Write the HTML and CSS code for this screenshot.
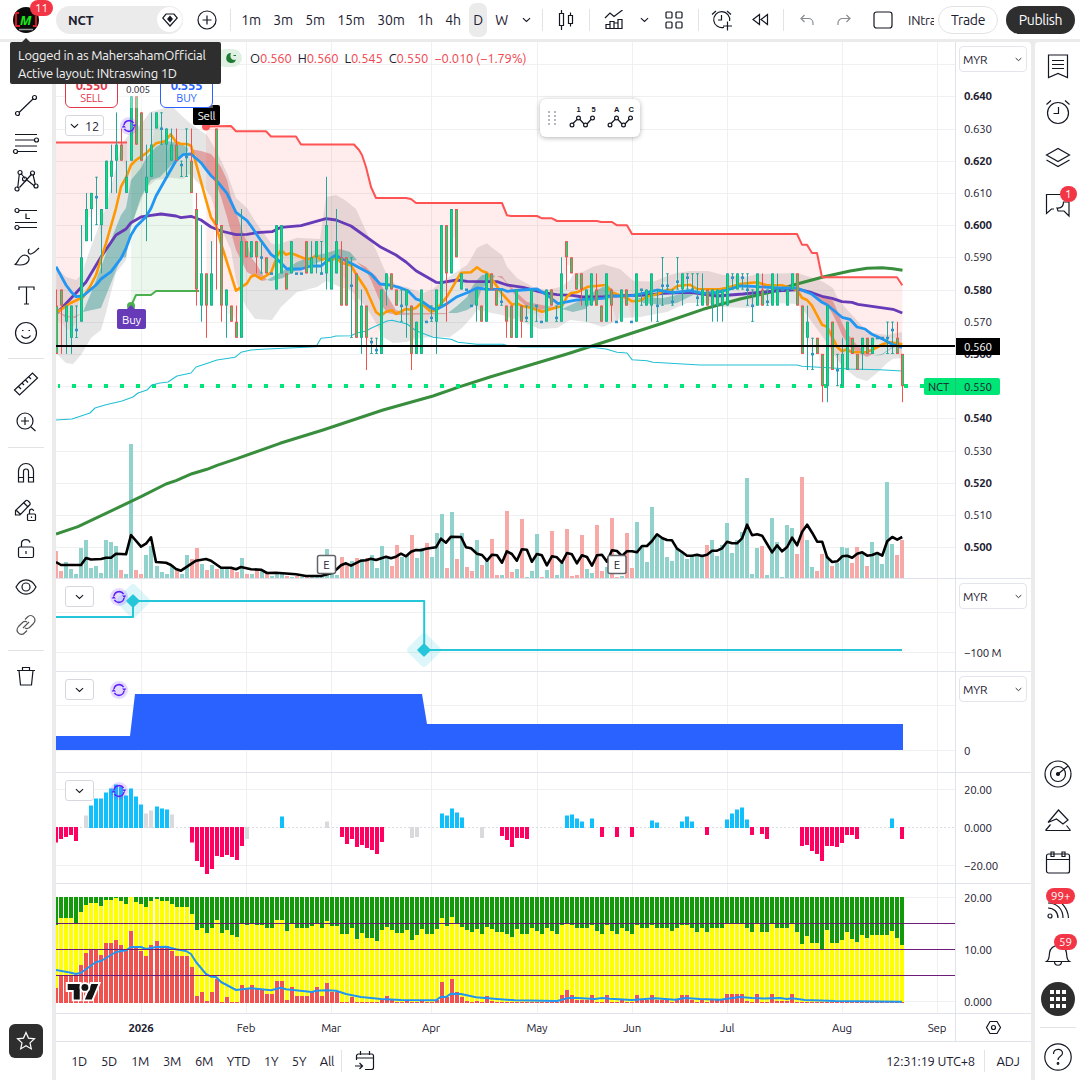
FILE: index.html
```html
<!DOCTYPE html>
<html lang="en">

<head>
    <meta charset="UTF-8">
    <meta name="viewport" content="width=device-width, initial-scale=1.0">
    <title>NCT 0.550</title>
    <link rel="stylesheet" href="styles.css">
</head>

<body>
    <!-- shared symbols -->
    <svg class="defs">
        <symbol id="chev" viewBox="0 0 10 6"><path d="M1 1l4 3.6L9 1"/></symbol>
        <symbol id="sync" viewBox="0 0 18 18">
            <circle cx="9" cy="9" r="9" fill="#7b4dff" fill-opacity=".2" stroke="none"/>
            <path d="M4 8a5.2 5.2 0 0 1 9.6-1.8M14 10a5.2 5.2 0 0 1-9.6 1.8" stroke="#5b21f5" stroke-width="1.5"/>
            <path d="M12 7.6h4.4L14.4 10zM6 10.400H1.600L3.600 8z" fill="#5b21f5" stroke="none"/>
        </symbol>
    </svg>

    <header class="topbar">
        <div class="avatar">
            <svg width="26" height="26" viewBox="0 0 26 26">
                <circle cx="13" cy="13" r="13" fill="#0b0b0b" stroke="none"/>
                <path d="M6 6H3v13h4M20 19h3V9" stroke="#e01b24" stroke-width="1.8"/>
                <text x="12.500" y="17.500" class="avatar-m">M</text>
                <path d="M6 22.500h14" stroke="#999" stroke-width="1.500"/>
            </svg>
            <span class="badge">11</span>
        </div>
        <div class="search">
            <b>NCT</b>
            <span class="gem"><svg width="16" height="14" viewBox="0 0 16 14"><path d="M4 1h8l3.300 4L8 13 .7 5z"/><path d="M8 3.500L10.200 6 8 8.500 5.800 6z" fill="#131722"/></svg></span>
        </div>
        <div class="ib w-add"><svg width="20" height="20" viewBox="0 0 20 20"><circle cx="10" cy="10" r="9"/><path d="M10 5.500v9M5.500 10h9"/></svg></div>
        <i class="sep"></i>
        <span class="tf tf-first">1m</span>
        <span class="tf">3m</span>
        <span class="tf">5m</span>
        <span class="tf tf-wide">15m</span>
        <span class="tf tf-wide">30m</span>
        <span class="tf tf-hour">1h</span>
        <span class="tf tf-hour">4h</span>
        <span class="tf active">D</span>
        <span class="tf tf-week">W</span>
        <div class="ib w24"><svg width="9" height="6"><use href="#chev"/></svg></div>
        <i class="sep sep-l4"></i>
        <div class="ib w46"><svg width="16" height="20" viewBox="0 0 16 20"><path d="M1.500 3.500h4v12h-4zM3.500 0v3.500M3.500 15.500V20M10.500 5.500h4v8h-4zM12.500 2.500v3M12.500 13.500v3"/></svg></div>
        <i class="sep"></i>
        <div class="ib w48"><svg width="20" height="20" viewBox="0 0 20 20"><path d="M1 8l5-5 4 3.500L18.500 0M2 18.500v-4h4v4zM6 18.500v-7h4v7zM10 18.500v-5.500h4v5.500zM14 18.500v-9h4v9z"/></svg></div>
        <div class="ib w12"><svg width="9" height="6"><use href="#chev"/></svg></div>
        <div class="ib w48"><svg width="18" height="18" viewBox="0 0 18 18"><rect x="1" y="1" width="6" height="6" rx="1"/><rect x="11" y="1" width="6" height="6" rx="1"/><rect x="1" y="11" width="6" height="6" rx="1"/><rect x="11" y="11" width="6" height="6" rx="1"/></svg></div>
        <i class="sep"></i>
        <div class="ib w46"><svg width="22" height="22" viewBox="0 0 22 22"><path d="M13 18.300A8 8 0 1 1 18.600 12M10.500 6v5H7M1 5.500L5 2M16 2l4 3.500M16.500 12.500v9M12 17h9"/></svg></div>
        <div class="ib w30"><svg width="17" height="14" viewBox="0 0 17 14"><path d="M7.500 1.500v10L1 6.500zM15.500 1.500v10L9 6.500z"/></svg></div>
        <i class="sep sep-l8"></i>
        <div class="ib w46 muted"><svg width="14" height="12" viewBox="0 0 14 12"><path d="M4.500 1L1 4.500 4.500 8M1 4.500h7.500a4.500 4.500 0 0 1 4.500 4.500v2"/></svg></div>
        <div class="ib w28 muted"><svg width="14" height="12" viewBox="0 0 14 12"><path d="M9.500 1L13 4.500 9.500 8M13 4.500H5.500A4.500 4.500 0 0 0 1 9v2"/></svg></div>
        <div class="ib w34"><svg width="20" height="18" viewBox="0 0 20 18"><rect x="1" y="1" width="18" height="16" rx="2.500"/></svg></div>
        <span class="layout-name">INtraswing</span>
        <a class="trade">Trade</a>
        <a class="publish">Publish</a>
    </header>

    <div class="workspace">
        <nav class="tools">
            <div class="tool"><svg width="28" height="28" viewBox="0 0 28 28"><path d="M7 21.500L21 8"/><circle cx="5.500" cy="22.500" r="2"/><circle cx="22.500" cy="6.500" r="2"/></svg></div>
            <div class="tool"><svg width="28" height="28" viewBox="0 0 28 28"><path d="M3 5.500h22M3 11h19.500M3 17h22M5.500 22.500H25"/><circle cx="24.500" cy="11" r="2"/><circle cx="3.500" cy="22.500" r="2"/></svg></div>
            <div class="tool"><svg width="28" height="28" viewBox="0 0 28 28"><path d="M7.300 7l-1.600 14M7.500 20.500L19.800 7M9 6.500l4 5M15 13l7.500 6M21 7.500l2.300 10"/><circle cx="8" cy="5.500" r="2"/><circle cx="20.500" cy="6" r="2"/><circle cx="12.500" cy="12" r="2"/><circle cx="5" cy="22" r="2"/><circle cx="24" cy="19" r="2"/></svg></div>
            <div class="tool"><svg width="28" height="28" viewBox="0 0 28 28"><path d="M7 5.500h18M3 17.500h22M7 22.500h18M14 8.500v5h4"/><circle cx="5" cy="5.500" r="2"/><circle cx="5" cy="22.500" r="2"/></svg></div>
            <div class="tool"><svg width="28" height="28" viewBox="0 0 28 28"><path d="M2.500 21.500c4-.5 3.500-9 10-9.500 3.500 0 5.500 3 4 6-2 4-8 4.500-14 3.500zM17.500 6c-2 1-1.500 4.500.5 5 3 .5 5-2.500 9-6"/></svg></div>
            <div class="tool"><svg width="28" height="28" viewBox="0 0 28 28"><path d="M7 9V6h15v3M14.500 6v17M12 23h5"/></svg></div>
            <div class="tool"><svg width="28" height="28" viewBox="0 0 28 28"><circle cx="14" cy="14" r="10.500"/><path d="M9.500 16.500c2 3.500 7 3.500 9 0M10 11.500h1.500M16.500 11.500H18"/></svg></div>
            <i class="line"></i>
            <div class="tool"><svg width="28" height="28" viewBox="0 0 28 28"><path d="M2.500 20L20.500 3l5 5-18 17zM6.500 16.500l2.500 2.500M10 13l2 2M13.500 10l2.500 2.500M17 7l2 2"/></svg></div>
            <div class="tool"><svg width="28" height="28" viewBox="0 0 28 28"><circle cx="13" cy="13" r="8"/><path d="M9 13h8M13 9v8M19 19l4.500 4"/></svg></div>
            <i class="line"></i>
            <div class="tool"><svg width="28" height="28" viewBox="0 0 28 28"><path d="M6.500 23V12a7.500 7.500 0 0 1 15 0v11h-5V12.500a2.500 2.500 0 0 0-5 0V23zM6.500 18.500h5M16.500 18.500h5"/></svg></div>
            <div class="tool"><svg width="28" height="28" viewBox="0 0 28 28"><path d="M3.500 18v-4.500L14 3.500c1-1 5 2.500 4 4l-10 10.500zM12 6l4 4M4.500 13.500l4 4"/><rect x="15.500" y="17" width="8" height="6.500" rx="1"/><path d="M17.500 17v-2.500c0-3 4-3 4-.5M19.500 19.500v1.500"/></svg></div>
            <div class="tool"><svg width="28" height="28" viewBox="0 0 28 28"><rect x="6.500" y="12" width="15" height="10.500" rx="1.500"/><path d="M9.500 12V8.500c0-5 7.500-5 8.500-1M14 16v3" /></svg></div>
            <div class="tool"><svg width="28" height="28" viewBox="0 0 28 28"><path d="M4 14c5-9.500 15-9.500 20 0-5 9.500-15 9.500-20 0z"/><circle cx="14" cy="14" r="4"/></svg></div>
            <div class="tool"><svg width="28" height="28" viewBox="0 0 28 28" class="thin"><path d="M13 8.500l2.500-2.500c4-4 10 1.500 6 6.500l-4 4c-1.500 1.200-3 1.300-4.500.5M15 19.500L12.500 22c-4 4-10-1.500-6-6.500l4-4c1.500-1.200 3-1.300 4.500-.5M11 17l6-6"/></svg></div>
            <i class="line"></i>
            <div class="tool"><svg width="28" height="28" viewBox="0 0 28 28"><path d="M5 8.500h18M7 8.500l1.500 14.500h11L21 8.500M10.500 8.500V5.500h7v3"/></svg></div>
            <div class="fav"><svg width="22" height="22" viewBox="0 0 22 22"><path d="M11 2.500l2.500 5.600 6 .7-4.500 4.100 1.300 6L11 15.800l-5.300 3.100 1.300-6-4.500-4.100 6-.7z"/></svg></div>
        </nav>

        <main class="chart-area">
            <svg id="chart" viewBox="56 42 975 1000" width="975" height="1000"></svg>

            <div class="ohlc">
                <span class="moon"><svg width="12" height="12" viewBox="0 0 12 12"><path d="M6 1a5 5 0 1 0 5 6.500C7.500 9 4 6 6 1z" fill="#1f7a34" stroke="none"/><path d="M8.500 3.500h2.500" stroke="#1f7a34"/></svg></span>
                <span>O<em>0.560</em></span>
                <span>H<em>0.560</em></span>
                <span>L<em>0.545</em></span>
                <span>C<em>0.550</em></span>
                <em>−0.010 (−1.79%)</em>
            </div>
            <div class="orders">
                <div class="order sell"><b>0.550</b>SELL</div>
                <span class="spread">0.005</span>
                <div class="order buy"><b>0.555</b>BUY</div>
            </div>
            <div class="legend-row l1">
                <span class="legend-btn"><svg width="9" height="6"><use href="#chev"/></svg> 12</span>
                <svg width="18" height="18"><use href="#sync"/></svg>
            </div>
            <div class="legend-row l2"><span class="legend-btn"><svg width="9" height="6"><use href="#chev"/></svg></span><svg width="18" height="18"><use href="#sync"/></svg></div>
            <div class="legend-row l3"><span class="legend-btn"><svg width="9" height="6"><use href="#chev"/></svg></span><svg width="18" height="18"><use href="#sync"/></svg></div>
            <div class="legend-row l4"><span class="legend-btn"><svg width="9" height="6"><use href="#chev"/></svg></span><svg width="18" height="18"><use href="#sync"/></svg></div>

            <div class="currency c1">MYR<svg width="7" height="5"><use href="#chev"/></svg></div>
            <div class="currency c2">MYR<svg width="7" height="5"><use href="#chev"/></svg></div>
            <div class="currency c3">MYR<svg width="7" height="5"><use href="#chev"/></svg></div>

            <!-- favourite drawings -->
            <div class="float-bar">
                <svg width="10" height="14" viewBox="0 0 10 14" class="grip"><path d="M1 1h2M7 1h2M1 5h2M7 5h2M1 9h2M7 9h2M1 13h2M7 13h2"/></svg>
                <svg width="28" height="24" viewBox="0 0 28 24"><path d="M4 17.500l4-4M11 13.500l4 4.500M18 18l4-4.500"/><circle cx="3" cy="19" r="1.900"/><circle cx="9.500" cy="12" r="1.900"/><circle cx="16.500" cy="19" r="1.900"/><circle cx="23.500" cy="12" r="1.900"/><text x="9.500" y="6">1</text><text x="24.500" y="6">5</text></svg>
                <svg width="28" height="24" viewBox="0 0 28 24"><path d="M4 17.500l4-4M11 13.500l4 4.500M18 18l4-4.500"/><circle cx="3" cy="19" r="1.900"/><circle cx="9.500" cy="12" r="1.900"/><circle cx="16.500" cy="19" r="1.900"/><circle cx="23.500" cy="12" r="1.900"/><text x="9.500" y="6">A</text><text x="24" y="6">C</text></svg>
            </div>

            <footer class="ranges">
                <span class="r1">1D</span><span class="r1">5D</span><span class="r2">1M</span><span class="r2">3M</span><span class="r2">6M</span><span class="r3">YTD</span><span class="r4">1Y</span><span class="r4">5Y</span><span class="r4">All</span>
                <i class="sep"></i>
                <svg width="22" height="20" viewBox="0 0 22 20" class="goto"><path d="M2.500 9V5a2 2 0 0 1 2-2h13a2 2 0 0 1 2 2v11.500a2 2 0 0 1-2 2H11M2.500 7h17M6.500 0v4M15.500 0v4M1 15h7M5.500 12l3 3-3 3"/></svg>
                <span class="clock">12:31:19 UTC+8</span>
                <i class="sep"></i>
                <span class="adj">ADJ</span>
            </footer>
        </main>

        <aside class="sidebar">
            <div class="side"><svg width="28" height="28" viewBox="0 0 28 28"><path d="M4.500 3h19v22.500L14 21.500l-9.500 4zM8 8.500h12M8 12.500h12M8 16.500h12"/></svg></div>
            <div class="side"><svg width="28" height="28" viewBox="0 0 28 28"><circle cx="14" cy="15" r="10.500"/><path d="M14.500 9v6.500h-5M2.500 6.500L7 2.500M21 2.500l4.500 4"/></svg></div>
            <div class="side"><svg width="28" height="28" viewBox="0 0 28 28"><path d="M2.500 11L14 4.500 25.500 11 14 17.500zM2.500 16L14 22.500 25.500 16"/></svg></div>
            <div class="side"><svg width="28" height="28" viewBox="0 0 28 28"><path d="M20 9V4.500H2.500v19l5-4.500H10M13 18c5 .5 6.500-2.500 6.500-6h5.500v14l-5-5h-6z"/></svg><span class="badge b-chat">1</span></div>
            <div class="side push"><svg width="28" height="28" viewBox="0 0 28 28"><circle cx="14" cy="14" r="13"/><circle cx="14" cy="14" r="7.500"/><path d="M14 14l10-8"/><circle cx="14" cy="14" r="1.500" fill="#131722"/></svg></div>
            <div class="side"><svg width="28" height="28" viewBox="0 0 28 28"><path d="M4 17.500L14.500 5l9.500 10-5 4-6.500-5-8.500 3.500M1.500 25.500l5-6M26.500 25.500l-4-5M1.500 25.500h25"/></svg></div>
            <div class="side"><svg width="28" height="28" viewBox="0 0 28 28"><rect x="2.500" y="4" width="23" height="19" rx="2"/><path d="M2.500 9.500h23M7 2h3v4.500H7zM18 2h3v4.500h-3z"/></svg></div>
            <div class="side"><svg width="28" height="28" viewBox="0 0 28 28"><circle cx="6" cy="21" r="2"/><path d="M4 13c6 0 10 4 10 10M4 8c9 0 15 6 15 15M9 4c8 1.500 15 9 15.500 19"/></svg><span class="badge b-feed">99+</span></div>
            <div class="side"><svg width="28" height="28" viewBox="0 0 28 28"><path d="M2.500 21.500c3-2 2.500-4.500 3-8.500.5-4.500 4-7.500 8.500-7.500s8 3 8.500 7.500c.5 4 0 6.500 3 8.500zM10.500 21.500c0 5 7 5 7 0"/></svg><span class="badge b-bell">59</span></div>
            <div class="side"><svg width="34" height="34" viewBox="0 0 34 34"><circle cx="17" cy="17" r="17" fill="#2e2e2e" stroke="none"/><path d="M9 10h4M15 10h4M21 10h4M9 17h4M15 17h4M21 17h4M9 24h4M15 24h4M21 24h4" stroke="#fff" stroke-width="4"/></svg></div>
            <i class="line"></i>
            <div class="side help"><svg width="28" height="28" viewBox="0 0 28 28"><circle cx="14" cy="14" r="13.200"/><path d="M9.500 11c0-6 9-6 9-1 0 3.500-4.500 3-4.500 7"/><circle cx="14" cy="20.500" r=".8"/></svg></div>
        </aside>
    </div>

    <div class="tooltip">Logged in as MahersahamOfficial<br>Active layout: INtraswing 1D</div>

    <script src="chart.js"></script>
</body>
</html>
```
FILE: styles.css
```css
* {
    box-sizing: border-box;
}

body {
    margin: 0;
    width: 1080px;
    height: 1080px;
    overflow: hidden;
    background: #ebebeb;
    color: #1c2030;
    font-family: "Ubuntu", "Noto Sans", sans-serif;
    font-size: 13px;
    letter-spacing: -0.2px;
}

svg {
    display: block;
    flex: none;
    fill: none;
    stroke: #131722;
    stroke-width: 1.2;
}

svg text {
    stroke: none;
}

.defs {
    position: absolute;
    width: 0;
    height: 0;
}

/* top bar */
.topbar {
    display: flex;
    align-items: center;
    height: 39px;
    background: #fff;
}

.avatar {
    position: relative;
    width: 52px;
    padding-left: 13px;
    margin-right: 4px;
}

.avatar-m {
    font: italic bold 13px "Noto Sans", sans-serif;
    text-anchor: middle;
    fill: #19e619;
}

.badge {
    position: absolute;
    top: -7px;
    left: 30px;
    height: 16px;
    padding: 0 5px;
    border-radius: 8px;
    background: #f23645;
    color: #fff;
    font-size: 11.5px;
    line-height: 16px;
    letter-spacing: 0;
}

.search {
    display: flex;
    align-items: center;
    justify-content: space-between;
    width: 127px;
    height: 28px;
    padding: 0 1px 0 12px;
    border-radius: 14px;
    background: #ebebeb;
}

.gem {
    display: flex;
    align-items: center;
    justify-content: center;
    width: 25px;
    height: 25px;
    border-radius: 50%;
    background: #fff;
}

.ib {
    display: flex;
    flex: none;
    align-items: center;
    justify-content: center;
    height: 34px;
}

.muted svg {
    stroke: #8a8c93;
}

.w-add { width: 47px; }
.w12 { width: 12px; }
.w24 { width: 24px; }
.w28 { width: 28px; }
.w30 { width: 30px; }
.w34 { width: 34px; margin-left: 8px; }
.w46 { width: 46px; }
.w48 { width: 48px; }

.sep {
    flex: none;
    width: 1px;
    height: 22px;
    background: #e3e3e5;
}

.sep-l4 { margin-left: 4px; }
.sep-l8 { margin-left: 8px; }

.tf {
    flex: none;
    width: 32px;
    font-size: 14px;
    line-height: 34px;
    text-align: center;
}

.tf-first { margin-left: 4px; }
.tf-wide { width: 40px; }
.tf-hour { width: 28px; }
.tf-week { width: 25px; }

.tf.active {
    width: 18px;
    margin: 0 2px;
    border-radius: 7px;
    background: #ebebeb;
}

.layout-name {
    flex: none;
    width: 26px;
    margin-left: 8px;
    overflow: hidden;
    white-space: nowrap;
}

.trade,
.publish {
    flex: none;
    height: 28px;
    border-radius: 14px;
    font-size: 14px;
    line-height: 26px;
    text-align: center;
    letter-spacing: -0.3px;
}

.trade {
    width: 60px;
    margin-left: 4px;
    border: 1px solid #e3e3e5;
}

.publish {
    width: 69px;
    margin-left: 8px;
    background: #2e2e2e;
    color: #fff;
    line-height: 28px;
}

/* body */
.workspace {
    display: flex;
    gap: 4px;
    height: 1038px;
    margin-top: 3px;
}

.tools {
    display: flex;
    flex-direction: column;
    align-items: center;
    width: 52px;
    padding-top: 44px;
    border-radius: 0 4px 0 0;
    background: #fff;
}

.tool {
    display: flex;
    flex: none;
    align-items: center;
    justify-content: center;
    height: 38px;
}

.thin {
    stroke: #555;
}

.line {
    flex: none;
    width: 36px;
    height: 1px;
    margin: 6px 0;
    background: #e3e3e5;
}

.fav {
    display: flex;
    align-items: center;
    justify-content: center;
    width: 34px;
    height: 34px;
    margin: auto 0 22px;
    border-radius: 6px;
    background: #2e2e2e;
}

.fav svg {
    stroke: #fff;
}

.chart-area {
    position: relative;
    display: flex;
    flex-direction: column;
    width: 975px;
    border-radius: 4px 4px 0 0;
    background: #fff;
    overflow: hidden;
}

.ohlc {
    position: absolute;
    top: 7px;
    left: 160px;
    display: flex;
    gap: 6px;
    line-height: 19px;
    letter-spacing: -0.15px;
    white-space: nowrap;
}

.ohlc em {
    color: #f0474f;
    font-style: normal;
}

.moon {
    display: flex;
    align-items: center;
    justify-content: flex-end;
    width: 26px;
    height: 18px;
    margin-right: 2px;
    padding-right: 5px;
    border-radius: 9px;
    background: #e0f1e3;
}

.orders {
    position: absolute;
    top: 30px;
    left: 9px;
    display: flex;
    gap: 42px;
    background: rgba(255, 255, 255, .35);
}

.order {
    display: flex;
    flex-direction: column;
    justify-content: flex-end;
    width: 53px;
    height: 36px;
    border: 1px solid;
    border-radius: 6px;
    background: #fff;
    font-size: 11px;
    line-height: 13px;
    text-align: center;
    padding-bottom: 2px;
}

.order b {
    font-size: 13px;
    line-height: 14px;
}

.sell { color: #e3364a; }
.buy { color: #2962ff; }

.spread {
    position: absolute;
    top: 12px;
    left: 61px;
    font-size: 10px;
}

.legend-row {
    position: absolute;
    left: 9px;
    display: flex;
    align-items: center;
    gap: 16px;
}

.legend-btn {
    display: flex;
    align-items: center;
    justify-content: center;
    gap: 6px;
    width: 29px;
    height: 21px;
    border: 1px solid #d6d8de;
    border-radius: 3px;
    background: #fff;
}

.l1 .legend-btn { width: 39px; }
.l1 { top: 73px; }
.l2 { top: 544px; }
.l3 { top: 637px; }
.l4 { top: 738px; }

.currency {
    position: absolute;
    left: 903px;
    display: flex;
    align-items: center;
    justify-content: space-between;
    width: 68px;
    height: 26px;
    padding: 0 4px 0 3px;
    border: 1px solid #e3e5ea;
    border-radius: 4px;
    background: #fff;
    font-size: 12px;
}

.c1 { top: 4px; }
.c2 { top: 541px; }
.c3 { top: 634px; }

.float-bar {
    position: absolute;
    top: 57px;
    left: 484px;
    display: flex;
    align-items: center;
    gap: 10px;
    width: 100px;
    height: 38px;
    padding-left: 7px;
    border-radius: 6px;
    background: #fff;
    box-shadow: 0 1px 5px rgba(0, 0, 0, .3);
}

.float-bar .grip {
    stroke: #b6b8bf;
    stroke-width: 2;
    margin-right: 2px;
}

.float-bar text {
    fill: #131722;
    font: bold 7.5px "Liberation Sans", sans-serif;
    text-anchor: middle;
}

.ranges {
    display: flex;
    align-items: center;
    height: 38px;
    padding-left: 8px;
    text-align: center;
}

.r1 { width: 30px; }
.r2 { width: 32px; }
.r3 { width: 37px; }
.r4 { width: 28px; }

.goto {
    margin-left: 12px;
}

.clock {
    margin: 0 9px 0 auto;
}

.adj {
    width: 46px;
}

.sidebar {
    position: relative;
    display: flex;
    flex-direction: column;
    align-items: center;
    width: 45px;
    padding-top: 1px;
    border-radius: 4px 0 0 0;
    background: #fff;
}

.side {
    position: relative;
    display: flex;
    flex: none;
    align-items: center;
    justify-content: center;
    width: 45px;
    height: 46px;
}

.push {
    margin-top: auto;
}

.push,
.push ~ .side {
    height: 45px;
}

.b-chat { top: 5px; left: 25px; }
.b-feed { top: 2px; left: 11px; }
.b-bell { top: 3px; left: 19px; }

.sidebar .help {
    height: 46px;
}

/* tooltip under the avatar */
.tooltip {
    position: absolute;
    top: 42px;
    left: 10px;
    width: 211px;
    height: 42px;
    padding: 4px 8px;
    border-radius: 2px;
    background: #2e2e2e;
    color: #f2f2f2;
    line-height: 18px;
    white-space: nowrap;
}

.tooltip::before {
    content: "";
    position: absolute;
    top: -4px;
    left: 11px;
    border: 5px solid transparent;
    border-top: 0;
    border-bottom-color: #2e2e2e;
}

/* chart text */
.axis {
    fill: #1c2030;
    font-size: 11.5px;
}

.axis-bold {
    font-weight: bold;
}

.mid {
    text-anchor: middle;
}

.white {
    fill: #fff;
}
```
FILE: chart.js
```js
const svg = document.getElementById('chart');
const parts = [];

const X = i => 56.4 + 5.005 * i;
const Y = level => 96.3 + 16.1 * level;   // one level = 0.005, level 0 = 0.640

function rect(x, y, w, h, fill, extra = '') {
    parts.push(`<rect x="${x}" y="${y}" width="${w}" height="${h}" fill="${fill}" stroke="none" ${extra}/>`);
}
function line(x1, y1, x2, y2, color, w = 1, extra = '') {
    parts.push(`<path d="M${x1} ${y1}L${x2} ${y2}" stroke="${color}" stroke-width="${w}" ${extra}/>`);
}
function poly(points, color, w) {
    parts.push(`<polyline points="${points}" fill="none" stroke="${color}" stroke-width="${w}" stroke-linejoin="round"/>`);
}
function area(points, fill) {
    parts.push(`<polygon points="${points}" fill="${fill}" stroke="none"/>`);
}
function text(x, y, str, cls = '') {
    parts.push(`<text x="${x}" y="${y}" class="axis ${cls}">${str}</text>`);
}

// type, high, body top, body bottom, low (doji: d, high, dot, low)
const candles = `r 12 13 16 16,r 12 12 13 16,g 13 13 14 16,g 13 13 15 16,d 13 14.5 15,g 8 10 14 14,g 6 7 9 9,g 6 6 7 9,d 5 6.25 8,g 7 7 8 11,
g 4 4 7 7,g 3 4 5 6,g 1 3 4 6,r 2 3 4 4,g 4 5 6 6,g 0 0 4 4,r 0 0 3 3,r 1 1 4 4,g 3 5 6 9,g 1 3 5 5,
g 1 1 2 2,d 1 2 3,g 2 2 3 5,g 2 3 4 4,r 2 3 4 4,d 4 4.25 5,d 2 3.75 5,r 2 4 6 6,r 6 7 12 13,g 8 11 13 14,
r 11 11 13 15,g 9 11 13 13,r 2 2 8 12,r 8 8 13 14,g 12 12 13 15,r 13 13 14 14,r 13 14 15 15,g 7 9 15 15,r 9 9 10 10,g 9 9 10 10,
r 9 9 10 11,d 9 10 11,r 10 10 11 11,d 11 11 11,g 8 8 12 12,g 8 8 11 11,r 11 11 12 12,g 9 9 11 11,d 11 11 11,d 11 11 11,
r 9 9 11 11,g 9 10 11 11,g 9 9 10 11,d 9 11 11,g 5 8 11 12,g 10 10 12 12,g 7 9 11 11,r 9 10 13 13,r 10 10 13 13,d 10 11.75 15,
r 11 11 15 15,g 12 13 15 16,r 13 13 15 17,d 15 15.25 16,d 15 15.75 16,g 12 12 16 16,g 11 11 12 13,r 11 11 12 12,r 12 12 13 13,d 12 13 14,
g 12 12 13 15,r 13 13 16 17,g 14 14 16 16,g 12 12 16 16,d 14 14 14,d 13 13.75 14,g 12 12 14 16,g 8 8 13 13,r 8 8 11 14,g 7 7 11 11,
r 7 7 10 10,g 11 11 12 12,d 12 12 12,d 13 13 13,g 12 12 13 14,r 13 13 14 14,g 11 11 14 14,r 11 11 12 12,r 12 12 13 13,d 12 12.75 13,
r 13 13 14 15,r 13 13 15 15,g 12 12 15 15,r 13 13 14 15,d 13 13.75 14,g 12 12 15 15,d 13 13 14,d 14 14 14,g 12 12 14 14,r 12 12 13 13,
d 13 13.75 14,g 10 11 14 14,r 9 9 10 12,r 10 10 11 11,r 11 11 12 12,r 11 11 12 13,g 12 12 13 14,g 11 11 13 13,r 11 12 13 13,r 13 13 14 14,
g 11 11 14 14,r 12 12 13 14,d 14 14 14,g 12 12 14 14,r 12 12 13 13,d 14 14 14,g 11 11 14 14,d 12 12 13,g 12 12 13 13,g 11 11 13 14,
d 12 13 14,d 10 11.75 13,d 11 11.75 12,d 12 12.75 13,d 10 11.5 12,g 11 11 12 13,d 11 11.25 12,d 11 12 12,d 11 12.5 13,g 11 12 13 13,
r 12 12 13 13,g 12 12 13 14,g 12 12 13 14,g 12 12 13 14,g 11 11 13 13,d 11 11.25 12,g 11 11 12 12,d 11 11.25 12,d 11 12 13,d 12 13 14,
g 11 11 13 13,r 11 12 13 13,d 12 12.75 13,g 11 11 13 13,g 11 12 13 13,d 12 12 12,g 12 12 13 13,g 11 11 12 12,r 11 11 13 13,r 13 13 16 16,
g 13 14 15 17,d 15 16 17,r 15 15 16 16,r 16 16 18 19,g 13 13 18 19,r 14 14 17 17,d 16 17 18,g 15 16 18 18,g 14 14 17 17,r 15 15 16 16,
r 16 16 17 17,g 15 15 16 17,r 15 15 16 16,g 15 15 16 16,d 15 15 15,d 15 15 15,d 14 15 16,d 14 14.5 16,r 14 15 16 16,r 16 16 18 19`
    .split(',').map(s => {
        const [t, ...n] = s.trim().split(' ');
        const v = n.map(Number);
        return t === 'd' ? { t, high: v[0], dot: v[1], low: v[2] } : { t, high: v[0], top: v[1], bottom: v[2], low: v[3] };
    });

const mid = i => Y((candles[i].high + candles[i].low) / 2);

// negative = down bar
const volume = [-27, -7, 16, 9, 4, 30, 38, 10, 12, 5, 38, 36, 32, -8, 4, 134, -8, -4, 23, 32, 12, 6, 4, 13, -9, 4, 23, -19, -30, 14,
    -8, 13, -9, 11, 9, -9, -6, 20, -4, 4, -8, 8, -5, 2, 5, 5, -2, 1, -2, 1, -1, 1, 1, 1, 29, 8, 3, -21, -15, 17,
    -20, 19, -20, 23, 10, 32, 20, -12, -33, 21, 23, -43, 20, 30, -35, 21, 45, 64, -10, 66, -19, 45, -11, -7, 38, -13, 19, -39, -3, 3,
    -67, -6, 9, -59, 1, 7, 44, -1, 8, -47, 3, 15, -49, -2, -3, -43, 9, 5, -53, -7, 11, -60, -1, 2, -45, -10, 56, 31, 16, 71,
    42, 39, 21, 17, 29, 26, 19, 22, 22, 22, -33, 38, 22, 33, 55, 25, 38, 46, 100, 4, 30, -32, 3, 60, 36, 1, 53, 50, -24, -101,
    38, 11, -7, -24, 22, -12, 15, 31, 30, -15, -31, 24, -12, 36, 23, 14, 96, 34, -23, -38];

const volumeMa = '56,562 61,565 81,565 86,558 91,559.5 101,559 106,557.7 111,557.7 116,553.7 126,554.3 131,535 141,546.7 146,543.7 151,537.3 156,562 166,562.7 171,565 176,569 181,570.7 196,560.7 206,559 211,560.7 221,567.7 231,567.7 236,569.3 241,567 251,569.3 261,569.7 267,573 276,572.7 296,574.3 306,576 321,576 332,573 337,569 341,565.3 346,563.3 351,565.7 361,560.7 366,560.3 371,558.7 376,560 386,556.7 391,558.3 396,556.7 401,553.7 406,556.3 411,551.7 416,550 421,550.3 426,548.7 436,547.3 441,538.7 446,542.7 451,536.7 461,537 466,547.3 471,548.3 477,553.7 482,555 487,560.7 492,554.7 497,555.3 502,562.7';
const volumeMaTail = [551.3, 554, 560.7, 549.3, 549.7, 561.7, 554, 555.3, 565.3, 556.3, 557.3, 562.7, 553, 554.3, 563.3, 555.3, 557, 565.7, 555.3, 554.7,
    561.7, 550.3, 551, 556, 551.3, 551.3, 552.3, 546, 546, 541, 534.3, 538, 540, 540.3, 548.7, 552, 555.7, 555.7, 554.7, 556,
    554.7, 550.7, 550.7, 548.3, 541.7, 543.3, 543.3, 538.3, 524.7, 535.3, 534.3, 535.7, 544, 552.3, 545.3, 551.3, 547, 537.7, 545.3, 531.7,
    524.7, 532.7, 541.7, 541.7, 557.3, 562, 561.3, 556.3, 555.7, 557.7, 553.7, 552.3, 555.7, 555, 553, 555.7, 541.3, 537, 539.7, 537];

const months = [[141, '2026'], [246, 'Feb'], [331, 'Mar'], [431, 'Apr'], [537, 'May'], [632, 'Jun'], [727, 'Jul'], [842, 'Aug'], [937, 'Sep']];

const bandUpper = '56,267 66,277 76,280 81,275 91,247 106,207 116,167 121,145 131,132 141,124 150,112 165,108 173,107 183,117 190,123 195,127 207,135 211,142 216,150 227,173 236,198 247,208 257,224 271,243 276,245 297,237.700 320,239 326,197 336,195 345,200 356,209 366,231 376,250 386,273 396,285 406,287 423,293 433,289 440,283 453,274 467,265 472,257 477,247.700 487,243.300 492,247.700 502,255 507,266.700 517,278 533,287 547,290 560,287 570,280 573,274 583,271.700 593,266.700 603,264.300 620,269 633,280.700 653,281.700 670,275 677,273 690,271 708,271 723,275 747,276.700 757,274 797,273 813,278 823,281.700 833,288 837,296.700 843,305 852,315 863,326.700 873,333 887,335 902,332';
const bandLower = '902,358 893,359 887,363 877,373 867,381 857,378 843,367 833,353 827,343 812,322 802,308 797,304 773,303 747,308 720,307 707,303 687,303 667,312 640,317 623,318 603,327 587,322 570,320 557,328 540,329 517,320 502,315 477,310 472,317 462,328 450,337 433,337 420,338 406,342 393,343 383,337 376,323 366,307 351,290 340,287 326,281 317,287 297,292 281,307 272,320 255,319 247,308 241,297 236,280 231,250 221,228 216,213 211,197 206,190 195,180 191,173 183,179 171,177.700 156,180 146,188 136,213 131,227 126,260 116,273 111,292 106,313 101,330 91,338 81,355 73,364 66,363 56,353';

const tealClouds = [
    '83,312 91,293 101,267 111,240 121,215 126,208 131,180 141,168 146,158 156,147 166,141 180,143 188,148 188,151 181,157 176,160 160,177 151,180 141,197 136,212 131,227 126,257 121,258 111,283 101,308',
    '267,280 281,272 297,262 310,257 326,253 340,249 350,252 357,260 351,261 340,258 326,259 310,266 297,270 283,278 271,281',
    '448,313 457,306 467,297 472,287 477,280 482,275 492,274 495,276 490,282 482,288 477,302 472,307 467,310 457,313',
    '562,309 577,302 593,292 603,287 612,288 613,295 603,297 593,302 585,309 573,312',
    '637,298 663,298 677,295 697,291 693,295 677,303 663,305 643,303',
    '873,356 882,354 892,347 900,346 892,348 882,355'];
const redClouds = [
    '56,311 65,315 72,317 80,314 83,312 75,318 65,317',
    '190,149 201,151 211,154 216,160 221,167 227,180 231,197 236,212 241,227 247,243 251,257 257,265 263,275 267,280 262,281 247,272 241,260 236,250 231,232 227,217 221,197 216,183 211,177 201,163 193,152',
    '357,262 366,267 371,272 376,276 381,285 386,293 391,302 396,310 406,313 447,313 447,314 397,315 387,313 381,304 376,292 371,280 366,271',
    '497,276 502,276 507,283 512,288 517,293 527,302 537,304 547,306 560,307 540,310 527,307 517,298 510,288 503,279',
    '802,292 812,293 827,297 833,301 837,310 842,323 847,333 857,345 867,353 875,353 867,357 857,352 850,347 842,335 837,323 832,313 827,305 822,302 812,295'];

const stopLine = '206,126.5 231,126 236,131.3 266,131.3 271,136.5 296,136.5 301,144.5 354,144.5 359,150 362,155 366,167 371,187 376,198 406,198 411,199 416,203 502,203 507,215.3 511,216 537,216 542,218.3 552,218.3 557,221 597,221 601,222 612,222 617,225.3 627,225.3 632,234 797,234 802,244.7 807,244.7 812,253 817,253 822,277.3 897,277.3 902.3,285.3';
const purple = '56,314 76,293 86,282 101,257 116,235 126,229 131,222.7 141,217 151,215.3 161,214 176,216 181,217.7 191,216.3 201,220 211,227 221,231 236,234.7 247,234.3 257,232.7 272,231.7 281,227.3 301,225.7 326,218.7 336,220 351,226 381,247.3 396,255 406,262 416,270.7 436,282.3 441,282.7 457,280 467,281.3 483,281.7 497,281.7 507,285 523,287.3 543,292.7 557,294.7 572,295.3 583,297 603,297 612,296 647,295 663,293.3 690,292.3 717,296 743,294 770,291.3 800,289.7 812,292.7 822,296.3 832,298.3 842,301.7 852,302.3 858,304.3 893,309.3 902.3,313';
const orange = '56,313 71,302.7 83,297.3 90,286.7 96,275 106,243.3 116,208.3 121,186.7 126,177.7 131,165 136,160 146,153.3 156,143.3 165,141.3 170.7,134.3 176,142 181,144 187,144 191,145.7 196,163.3 206,200 211,217.3 216,225 221,243.3 236,290.7 247,283.3 251,276.7 255,275 261,279 271,272.7 277,256.7 281,250 286,254.7 291,253 305,258.7 311,259 316,255.3 321,260 326,258.3 331,261.7 336,256.7 341,262.7 351,265.3 356,274 366,289.3 376,312 381,315.7 386,311.7 392,310.3 396,314 406,309 411,309.7 416,307.7 421,303.3 431,311.7 436,310 447,296.7 461,272.7 471,272.3 477,267.3 482,271 487,272.7 492,279.3 502,293.7 512,304.7 517,303.3 523,306.3 532,308 542,311.7 552,308.7 562,306 567,296.7 571,293 577,292.3 588,286.7 606,285 612,292.3 617,294.3 627,298 632,301.3 640,300.7 647,296.7 657,294.3 667,290 672,290 677,286 690,284.7 697,289 720,289.3 727,287.7 741,283.7 757,282.3 767,285.3 782,285.3 797,290 802,297.7 807,300 812,305.7 822,324.7 827,326.7 832,336.7 837,346.7 842,351.3 847,349.3 852,352.3 867,352 872,350 883,344 891,342.3 902.3,344.3';
const blue = '56,266.7 66,285 71,291.7 76,296.7 83,296 96,285 101,279 111,271.7 121,258.3 126,248.3 131,235 136,226.7 146,216.7 151,208.3 156,196 166,178.3 176,160.7 183,154.7 191,154 197,159.3 201,162.7 206,169.3 211,175.7 216,180 227,193.3 236,212.3 247,220.7 251,226 261,240.7 271,254.3 276,258 287,269 301,269 311,266 321,266 326,261.7 336,255 340,258 351,263.3 371,274 380,284 390,285 400,287.7 408,290.7 416,299 421,300.7 431,308 436,309.7 446,304.3 457,296.7 467,292.7 477,288 487,289.3 502,289.3 507,291.3 522,290 537,289 547,295 558,303.7 573,300.7 580,299.7 603,298.3 612,296 632,295.7 640,294 657,290 673,292.7 690,290.7 703,293.3 717,292.3 727,290 740,286 753,286.3 777,288 797,288 802,290 812,294.3 822,302.3 827,304.7 842,317.3 850,319.3 857,327 865,329 872,334.3 883,339.3 893,344.7 902,347.3';
const slowMa = '56,534 78,526.7 141,496.7 166,484 176,480.7 192,473.7 207,469.3 217,465.3 237,458.7 280,443.3 323,430 383,410 433,396 460,386.7 490,377 567,354 620,337 663,323 703,309.3 740,299 770,292.3 797,284 823,277 850,271 867,268.3 882,267.7 893,268.7 902.5,270.3';
const vwap = '56,420 72,419 90,413 95,408 105,405 122,401 133,397 138,393 147,390 152,385 160,383 168,382 177,376 191,373 196,367 206,363.7 217,360 235,357.3 241,352.3 251,350 267,349 316,346.7 321,338.3 331,337.3 336,336 351,335.7 356,333.3 366,331 371,328.3 387,321 392,320.3 407,324 416,330.7 433,337.3 451,339.3 458,342.3 477,344.3 503,344.3 507,345.5 522,347 590,347 606,349 617,352.3 627,353 632,359.7 647,360.7 653,362.3 700,365 797,365 802,366.3 850,369 880,369.7 902,371';

// momentum histogram: bar index -> height, 'x' marks neutral bars
const histogram = `0 -15.5,1 -12,2 -10,3 -8,4 -14,6 12.5x,7 22.5,8 29.5,9 29.5,10 35.5,11 39.5,12 43.5,13 41,14 32.5,15 39.5,16 31.5,17 23.5,18 14.5x,19 17.5x,20 21.5,21 19.5,22 18.500,23 13.5x,
27 -15.5,28 -34,29 -40,30 -47,31 -42,32 -29,33 -30,34 -28,35 -30,36 -33,37 -19,38 -12x,45 11.5,54 6.5x,57 -10,58 -17,59 -12,60 -20,61 -18,62 -21,63 -23,64 -27,65 -15,71 -11x,72 -10x,
77 14.5,78 12.5,79 19.500,80 15.5,81 10.5,85 -11x,89 -9,90 -13,91 -20,92 -11,93 -11,94 -12,102 12.5,103 13.5,104 9.5,105 6.5,107 9.5,109 -10,112 -10,115 -10,119 7.5,120 5.5,125 6.5,126 11.5,127 6.5,
130 -8,134 8.5,135 14.500,136 18.500,137 20.500,138 8.500,139 -8,141 -7,142 -12,149 -19,150 -18,151 -24,152 -27,153 -34,154 -19,155 -19,156 -20,157 -16,158 -8,159 -8,160 -12,167 9.500,169 -12`.split(',');

// green depth / red height for every bar of the bottom pane
const depth = [28, 21, 21, 21, 26, 15, 8, 6, 6, 9, 3, 3, 1, 4, 7, 0, 5, 7, 10, 4, 2, 4, 4, 7, 10, 10, 10, 17, 33, 31, 36, 31, 23, 36, 33, 38, 40, 27, 28, 27,
    28, 28, 31, 31, 23, 23, 34, 27, 31, 31, 31, 29, 27, 31, 24, 29, 29, 37, 37, 31, 42, 36, 41, 41, 44, 33, 30, 33, 36, 36, 33, 43, 38, 32, 37, 37, 32, 21, 29, 20,
    27, 30, 33, 35, 32, 37, 30, 32, 35, 35, 37, 40, 32, 37, 37, 31, 34, 37, 31, 34, 37, 28, 27, 28, 31, 31, 31, 28, 34, 37, 28, 34, 37, 31, 34, 37, 28, 31, 31, 28,
    31, 31, 31, 34, 31, 28, 28, 31, 35, 31, 35, 31, 31, 31, 27, 27, 27, 27, 31, 35, 27, 35, 35, 27, 31, 31, 31, 27, 35, 47, 39, 46, 46, 52, 33, 46, 46, 43, 35, 42,
    45, 38, 41, 38, 38, 38, 38, 34, 41, 48];
const heat = [15, 28, 28, 28, 28, 38, 50, 53, 53, 48, 60, 60, 63, 58, 53, 72, 57, 52, 47, 58, 62, 57, 57, 52, 47, 47, 47, 36, 7, 11, 2, 11, 24, 1, 6, 1, 1, 18, 14, 18,
    14, 14, 9, 9, 22, 22, 3, 16, 7, 7, 7, 11, 16, 7, 20, 11, 11, 1, 1, 6, 1, 1, 1, 1, 1, 3, 7, 3, 1, 1, 3, 1, 1, 3, 1, 1, 3, 21, 6, 24,
    11, 6, 2, 1, 2, 1, 7, 2, 1, 1, 1, 1, 1, 1, 1, 1, 1, 1, 1, 1, 1, 8, 13, 8, 3, 3, 3, 8, 1, 1, 8, 1, 1, 3, 1, 1, 8, 3, 3, 8,
    3, 3, 3, 1, 3, 8, 8, 3, 1, 3, 1, 3, 3, 3, 9, 9, 9, 9, 2, 1, 9, 1, 1, 9, 2, 2, 2, 9, 1];
const heatMa = '56,970 71,972.7 76,974 81,972.7 96,962 101,961 116,952 126,950.3 131,947 141,947 146,949 156,947 166,946.7 176,949.3 186,951 191,954 196,962 206,974 211,976.7 216,977 221,982 236,990 251,988.3 271,990.3 281,987.7 286,989.3 312,992 316,990.7 326,990.3 336,990.7 346,994 361,997 381,999 401,1000 436,1000.3 441,996.7 446,997 451,993.7 461,994 476,997.3 500,999.3 515,1000.3 557,1001 562,999.7 567,998.3 573,997.7 595,999 602,998 610,998.7 632,1000 655,998.3 675,999.7 685,998 700,999 720,999.7 740,997 752,998 765,998.5 780,998 787,999 792,998.3 805,1000 835,1001 902,1001.7';

function drawGrid() {
    const grid = '#f0f0f1';
    months.forEach(([x]) => line(x + .5, 42, x + .5, 1013, grid));
    for (let k = -2; k <= 28; k += 2) line(56, Math.round(Y(k)) + .5, 955, Math.round(Y(k)) + .5, grid);
    [612.5, 652.5, 705.5, 750.5, 789.5, 865.5, 897.5, 1001.5].forEach(y => line(56, y, 955, y, grid));
    line(56, 827.5, 955, 827.5, '#dcdde0', 1, 'stroke-dasharray="2 2"');
}

function drawVolume() {
    volume.forEach((v, i) => {
        const h = Math.abs(v);
        rect(Math.round(X(i) - 2), 578 - h, 4, h, v < 0 ? '#f7a9a7' : '#92d2cc');
    });
}

function drawAreas() {
    const mids = (from, to) => {
        const out = [];
        for (let i = from; i <= to; i++) out.push(`${X(i)},${mid(i)}`);
        return out;
    };
    area(bandUpper + ' ' + bandLower, 'rgba(100,100,100,.17)');
    area(`56,142.5 127,142.5 ${mids(0, 14).reverse().join(' ')}`, 'rgba(255,82,82,.11)');
    area(`${stopLine} ${mids(30, 169).reverse().join(' ')}`, 'rgba(255,82,82,.11)');
    area(`${mids(15, 27).join(' ')} 195,291 156,291 151,295 136,295 131,306`, 'rgba(76,175,80,.11)');
    tealClouds.forEach(c => area(c, 'rgba(38,145,135,.42)'));
    redClouds.forEach(c => area(c, 'rgba(215,70,70,.4)'));
}

function drawCandles() {
    candles.forEach((c, i) => {
        const x = Math.round(X(i) - .5);
        const color = c.t === 'r' ? '#ef5350' : '#26a69a';
        if (c.high !== c.low) rect(x, Y(c.high), 1, (c.low - c.high) * 16.1, color);
        if (c.t === 'd') {
            rect(x - 1, Y(c.dot) - 1, 3, 2.5, '#2f93c8');
            if (c.high !== c.low) {
                rect(x - 1, Y(c.high), 3, .8, color);
                rect(x - 1, Y(c.low) - .8, 3, .8, color);
            }
            return;
        }
        const h = (c.bottom - c.top) * 16.1;
        rect(x - 1, Y(c.top), 3, h, color);
        rect(x, Y(c.top) + 1, 1.3, h - 2, '#00e676');
    });
}

function drawMain() {
    drawVolume();
    drawAreas();
    poly(slowMa, '#388e3c', 3);
    line(58, 386, 924, 386, '#00e676', 4, 'stroke-dasharray="4 12" stroke-dashoffset="2"');
    poly(vwap, '#22bfd4', 1.1);
    poly('56,142.5 127,142.5', '#ff5252', 2);
    poly(stopLine, '#ff5252', 2);
    poly('131,306 136,295 151,295 156,291 199,291', '#4caf50', 2);
    poly(purple, '#673ab7', 2.8);
    poly(orange, '#ff9800', 2.6);
    poly(blue, '#2196f3', 2.8);
    drawCandles();
    line(56, 346, 955, 346, '#000', 2);
    const tail = volumeMaTail.map((y, n) => `${X(n + 90)},${y}`).join(' ');
    poly(volumeMa + ' ' + tail, '#000', 2.6);

    parts.push('<circle cx="206" cy="126.500" r="4" fill="#ff5252" stroke="none"/><circle cx="131" cy="306" r="4" fill="#4caf50" stroke="none"/>');
    rect(193, 105, 27, 20, '#000', 'rx="2"');
    text(206.5, 119.5, 'Sell', 'mid white');
    parts.push('<path d="M126 310l5-5 5 5z" fill="#673ab7" stroke="none"/>');
    rect(117, 309, 29, 20, '#673ab7', 'rx="2"');
    text(131.5, 323.500, 'Buy', 'mid white');
    [326.5, 617].forEach(x => {
        parts.push(`<rect x="${x - 9}" y="555.500" width="18" height="18" rx="2" fill="#fff" stroke="#626469" stroke-width="1.500"/>`);
        text(x, 569, 'E', 'mid');
    });
}

function drawPanes() {
    poly('56,617 133,617 133,601 424.2,601 424.2,650 902,650', '#26c6da', 2);
    [[133, 601], [424, 650]].forEach(([x, y]) => {
        parts.push(`<g transform="translate(${x} ${y}) rotate(45)" fill="#26c6da" stroke="none"><rect x="-13" y="-13" width="26" height="26" rx="4" fill-opacity=".16"/><rect x="-5" y="-5" width="10" height="10" rx="1"/></g>`);
    });
    area('56,736 130,736 135,694 422,694 427,724 903,724 903,750 56,750', '#2962ff');

    histogram.forEach(s => {
        const [i, v] = s.trim().split(' ');
        const h = parseFloat(v);
        const fill = v.endsWith('x') ? '#d9dadd' : h > 0 ? '#0fc0fc' : '#ff0062';
        rect(Math.round(X(+i) - 2), h > 0 ? 828 - h : 827, 4, Math.abs(h), fill);
    });

    depth.forEach((d, i) => {
        const x = i ? Math.round(X(i) - 2) : 56;
        const w = i ? 4 : 2;
        rect(x, 897, w, 106, '#ffff00');
        rect(x, 897, w, d, '#139a0b');
        const h = heat[i] || 1;
        rect(x, 1003 - h, w, h, '#f0524f');
    });
    poly(heatMa, '#2196f3', 2);
    [923.5, 949.5, 975.5].forEach(y => line(56, y, 955, y, '#6d1b7b'));
    parts.push('<g transform="translate(67.700 980.500) scale(.86)" stroke="#fff" stroke-width="4.500" paint-order="stroke" fill="#131313"><path d="M14 22H7V11H0V4h14v18zM28 22h-8l7.500-18h8L28 22z"/><circle cx="20" cy="8" r="4"/></g>');
}

function drawAxes() {
    const border = '#e0e3eb';
    line(955.5, 42, 955.5, 1041, border);
    [578.5, 671.5, 772.5, 883.5, 1013.5, 1041.5].forEach(y => line(56, y, 1031, y, border));
    for (let k = 0; k <= 14; k++) {
        if (k === 9) continue;
        text(964, 100.300 + 32.2 * k, (0.64 - k / 100).toFixed(3), k % 2 ? '' : 'axis-bold');
    }
    rect(956, 338, 44, 17, '#000');
    text(964, 351, '0.560', 'white');
    rect(924, 378, 76, 17, '#00e676', 'rx="2"');
    line(955.5, 378, 955.5, 395, '#20c46f');
    text(928, 391, 'NCT');
    text(964, 391, '0.550');
    text(964, 657, '−100 M');
    text(964, 755, '0');
    text(964, 794, '20.00');
    text(964, 832, '0.000');
    text(964, 870, '−20.00');
    text(964, 902, '20.00');
    text(964, 954, '10.00');
    text(964, 1006, '0.000');
    months.forEach(([x, name], n) => text(x, 1032, name, 'mid' + (n ? '' : ' axis-bold')));
    parts.push('<path d="M990 1021.500h7l3.500 6-3.500 6h-7l-3.500-6z" fill="none"/><circle cx="993.500" cy="1027.500" r="2"/>');
}

drawGrid();
drawMain();
drawPanes();
drawAxes();
svg.innerHTML = parts.join('');
```
